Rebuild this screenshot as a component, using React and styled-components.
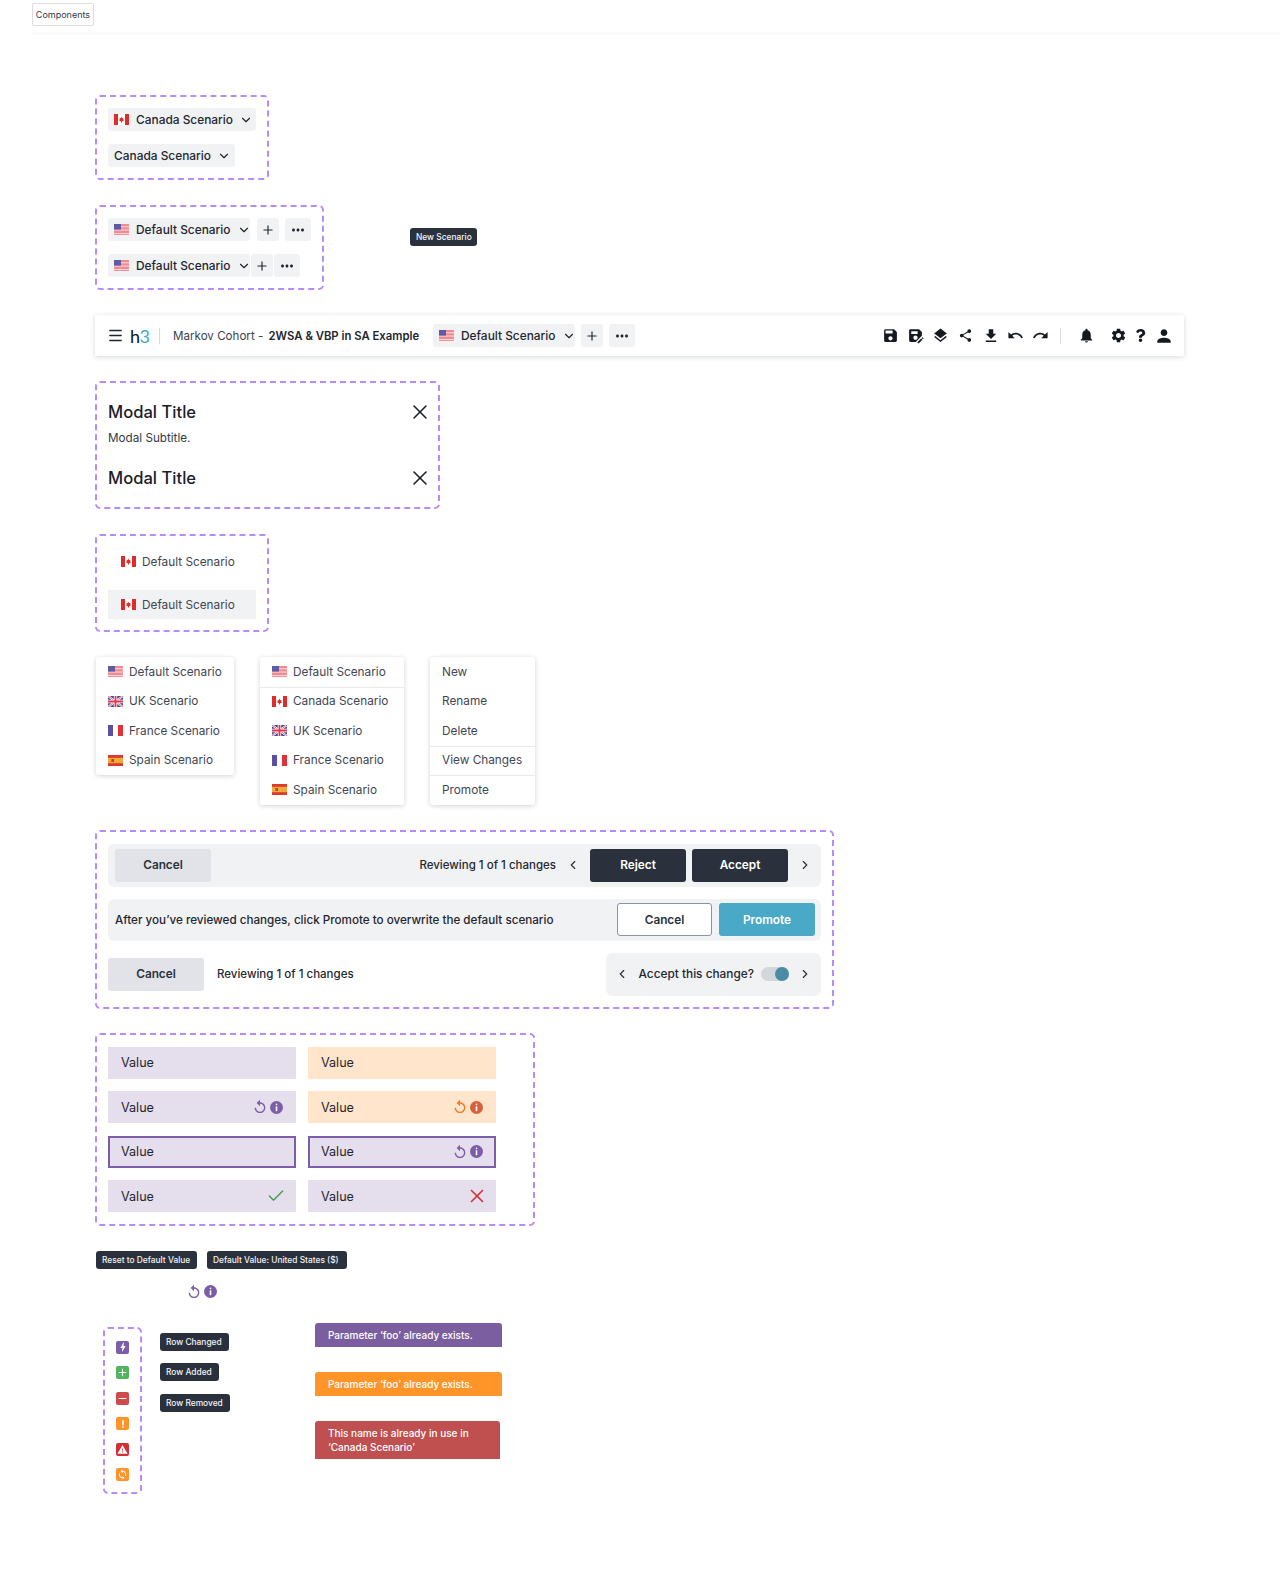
import React from 'react';
import styled, { createGlobalStyle } from 'styled-components';
import { Menu, Plus, ChevronDown, ChevronLeft, ChevronRight, Check, X } from 'lucide-react';
import { MdSave, MdSaveAs, MdLayers, MdShare, MdFileDownload, MdUndo, MdRedo, MdNotifications, MdSettings, MdPerson, MdReplay, MdMoreHoriz, MdBolt, MdAdd, MdRemove, MdPriorityHigh, MdWarning, MdSync } from 'react-icons/md';
import { FaQuestion } from 'react-icons/fa';

const GlobalStyle = createGlobalStyle`
  html, body { margin: 0; padding: 0; background: #fff; }
  body { font-family: Inter, "Open Sans", "Liberation Sans", sans-serif; color: #1f2630; }
  * { box-sizing: border-box; }
`;

const Page = styled.div`
  width: 1280px;
  height: 1589px;
  overflow: hidden;
  padding-top: 3px;
`;
const TopBar = styled.div`
  margin-left: 32px;
  padding-bottom: 7px;
  border-bottom: 1px solid #f7f7f9;
`;
const PageLabel = styled.div`
  width: 62px;
  height: 23px;
  border: 1px solid #dcdde3;
  border-radius: 2px;
  display: flex;
  align-items: center;
  justify-content: center;
  font-size: 9px;
  color: #333a45;
`;
const Content = styled.div`
  padding: 0 95px;
  display: flex;
  flex-direction: column;
  align-items: flex-start;
`;
const Frame = styled.section`
  border: 2px dashed #b88bfb;
  border-radius: 5px;
  padding: ${p => p.$pad || '10px 11px'};
  margin-top: ${p => p.$mt}px;
  width: ${p => p.$w}px;
  height: ${p => p.$h}px;
  display: flex;
  flex-direction: column;
  flex-shrink: 0;
`;
const Row = styled.div`
  display: flex;
  align-items: center;
  gap: ${p => p.$gap || 0}px;
  margin-top: ${p => p.$mt || 0}px;
  margin-left: ${p => p.$ml || 0}px;
`;
const Chip = styled.div`
  display: flex;
  align-items: center;
  height: 23px;
  padding: 0 5px 0 6px;
  gap: 6px;
  background: #f1f2f4;
  border-radius: 3px;
  font-size: 11.9px;
  font-weight: 500;
  white-space: nowrap;
  color: #1f2630;
  width: ${p => p.$w}px;
  justify-content: space-between;
  & > svg { flex-shrink: 0; }
`;
const ChipLabel = styled.span`
  display: flex;
  align-items: center;
  gap: 7px;
`;
const SquareChip = styled.div`
  display: flex;
  align-items: center;
  justify-content: center;
  width: ${p => p.$w}px;
  height: 23px;
  background: #f1f2f4;
  border-radius: 3px;
  margin-left: ${p => p.$ml || 0}px;
  color: #1f2630;
`;
const FlagSvg = styled.svg`
  width: 15px;
  height: 11px;
  display: block;
  flex-shrink: 0;
`;
const Flag = ({ kind }) => {
  if (kind === 'ca') return (
    <FlagSvg viewBox="0 0 15 11">
      <rect width="15" height="11" fill="#fff" />
      <rect width="4" height="11" fill="#e02b2b" />
      <rect x="11" width="4" height="11" fill="#e02b2b" />
      <path d="M7.5 2.6 8.2 4.2 9.4 3.8 9.1 5.5 10.4 6 8 7.6V8.6H7V7.6L4.6 6 5.9 5.5 5.6 3.8 6.8 4.2Z" fill="#e02b2b" />
    </FlagSvg>
  );
  if (kind === 'uk') return (
    <FlagSvg viewBox="0 0 15 11">
      <rect width="15" height="11" fill="#3c4f9a" />
      <path d="M0 0 15 11M15 0 0 11" stroke="#fff" strokeWidth="2" />
      <path d="M0 0 15 11M15 0 0 11" stroke="#e0455a" strokeWidth=".8" />
      <path d="M7.5 0V11M0 5.5H15" stroke="#fff" strokeWidth="3.4" />
      <path d="M7.5 0V11M0 5.5H15" stroke="#e0354a" strokeWidth="1.8" />
    </FlagSvg>
  );
  if (kind === 'fr') return (
    <FlagSvg viewBox="0 0 15 11">
      <rect width="5" height="11" fill="#5a4fa0" />
      <rect x="5" width="5" height="11" fill="#fff" />
      <rect x="10" width="5" height="11" fill="#e03038" />
    </FlagSvg>
  );
  if (kind === 'es') return (
    <FlagSvg viewBox="0 0 15 11">
      <rect width="15" height="11" fill="#f2a93b" />
      <rect width="15" height="2.8" fill="#dd3a2c" />
      <rect y="8.2" width="15" height="2.8" fill="#dd3a2c" />
      <rect x="3.4" y="4" width="2.6" height="3" fill="#b8452c" />
    </FlagSvg>
  );
  return (
    <FlagSvg viewBox="0 0 15 11">
      <rect width="15" height="11" fill="#f28a92" />
      <rect y="2.2" width="15" height="1.1" fill="#fbd5d7" />
      <rect y="5.5" width="15" height="1.1" fill="#fbd5d7" />
      <rect y="9" width="15" height="1.1" fill="#fbd5d7" />
      <rect width="7" height="5.6" fill="#5f5aa6" />
    </FlagSvg>
  );
};

const Tooltip = styled.div`
  display: inline-flex;
  align-items: center;
  height: 18px;
  padding: 0 6px;
  background: #2a313c;
  border-radius: 3px;
  color: #f3f4f6;
  font-size: 8.4px;
  font-weight: 500;
  white-space: nowrap;
  flex-shrink: 0;
  width: ${p => p.$w ? `${p.$w}px` : 'auto'};
`;
const FloatingTip = styled(Tooltip)`
  margin-left: 86px;
  margin-top: 4px;
  width: 67px;
`;

const Nav = styled.header`
  width: 1089px;
  height: 41px;
  margin-top: 25px;
  padding: 0 9px 0 12px;
  background: #fff;
  box-shadow: 0 1px 5px rgba(30, 40, 60, 0.18);
  display: flex;
  align-items: center;
`;
const Logo = styled.div`
  margin-left: 6px;
  width: 17px;
  font-family: "Lato", sans-serif;
  font-weight: 400;
  font-size: 18px;
  letter-spacing: -0.5px;
  color: #0f141a;
  & > span { color: #3fa8c9; }
`;
const NavDivider = styled.div`
  width: 1px;
  height: 16px;
  background: #d8dae0;
  margin: 0 ${p => p.$r}px 0 ${p => p.$l}px;
`;
const NavTitle = styled.div`
  font-size: 11.6px;
  color: #3a414d;
  white-space: nowrap;
  width: 247px;
  margin-right: 13px;
  & > b { font-size: 11.3px; font-weight: 600; color: #1f2630; margin-left: 2px; }
`;
const NavTools = styled.div`
  margin-left: auto;
  display: flex;
  align-items: center;
`;
const NavIcon = styled.span`
  width: ${p => p.$w || 25}px;
  margin-right: ${p => p.$mr || 0}px;
  display: flex;
  justify-content: center;
  color: #14181f;
`;

const ModalHead = styled.div`
  display: flex;
  align-items: center;
  justify-content: space-between;
  font-size: 16.6px;
  font-weight: 500;
  color: #1a2029;
  height: 24px;
  margin-top: ${p => p.$mt || 0}px;
`;
const CloseIcon = styled(X)`
  margin-right: -5px;
`;
const ModalSub = styled.div`
  font-size: 11.7px;
  color: #333a45;
  margin-top: 7px;
  height: 14px;
  line-height: 14px;
`;

const MenuItem = styled.div`
  display: flex;
  align-items: center;
  gap: 6px;
  height: ${p => p.$h || 29.5}px;
  padding: 0 12px;
  font-size: 11.8px;
  color: #3f4653;
  white-space: nowrap;
  background: ${p => p.$active ? '#f1f2f4' : 'transparent'};
  box-shadow: ${p => p.$line ? '0 1px 0 #e8eaee' : 'none'};
  margin-top: ${p => p.$mt || 0}px;
`;
const FrameItem = styled(MenuItem)`
  padding: 0 13px;
`;
const Dropdowns = styled.div`
  display: flex;
  align-items: flex-start;
  margin-top: 25px;
  margin-left: 1px;
`;
const DropMenu = styled.div`
  width: ${p => p.$w}px;
  margin-right: ${p => p.$mr || 0}px;
  background: #fff;
  border-radius: 3px;
  box-shadow: 0 1px 5px rgba(30, 40, 60, 0.2);
`;

const Bar = styled.div`
  display: flex;
  align-items: center;
  height: ${p => p.$h}px;
  background: #f1f2f4;
  border-radius: 6px;
  padding: 0 ${p => p.$pr ?? 6}px 0 7px;
  margin-top: ${p => p.$mt || 0}px;
  font-size: 11.65px;
  font-weight: 500;
  color: #1f2630;
  white-space: nowrap;
`;
const Action = styled.div`
  width: ${p => p.$w || 96}px;
  height: 33px;
  border-radius: 3px;
  display: flex;
  align-items: center;
  justify-content: center;
  font-size: 11.8px;
  font-weight: 600;
  flex-shrink: 0;
  margin-left: ${p => p.$ml || 0}px;
  color: ${p => ({ dark: '#fff', teal: '#fff' }[p.$kind] || '#2a313c')};
  background: ${p => ({ grey: '#e1e3e8', dark: '#2a313c', teal: '#4aa9c7', outline: '#fff' }[p.$kind])};
  border: ${p => p.$kind === 'outline' ? '1px solid #8d939e' : '0'};
`;
const Push = styled.span`
  margin-left: auto;
`;
const Chevron = styled.span`
  display: flex;
  justify-content: center;
  width: ${p => p.$w}px;
  color: #2a313c;
`;
const ReviewText = styled.span`
  font-size: 11.5px;
  font-weight: 500;
  margin-left: ${p => p.$ml || 0}px;
  white-space: nowrap;
`;
const AcceptText = styled(ReviewText)`
  font-size: 11.85px;
`;
const Toggle = styled.span`
  width: 28px;
  height: 14px;
  margin-left: 7px;
  border-radius: 7px;
  background: #d3d6db;
  position: relative;
  flex-shrink: 0;
  &::after {
    content: '';
    position: absolute;
    right: 0;
    top: 0;
    width: 14px;
    height: 14px;
    border-radius: 50%;
    background: #4a8ca6;
  }
`;

const FieldGrid = styled.div`
  display: grid;
  grid-template-columns: 188px 188px;
  grid-auto-rows: 32px;
  column-gap: 12px;
  row-gap: 12.6px;
`;
const Field = styled.div`
  display: flex;
  align-items: center;
  justify-content: space-between;
  font-size: 12.6px;
  color: #1f2630;
  background: ${p => p.$orange ? '#ffe5cc' : '#e5dfed'};
  border: ${p => p.$focus ? '2px solid #7b5ea7' : '0'};
  padding: 0 ${p => p.$focus ? 11 : 13}px;
`;
const FieldX = styled(X)`
  margin-right: -4.5px;
`;
const FieldCheck = styled(Check)`
  margin-right: -3px;
`;
const IconPair = styled.span`
  display: flex;
  align-items: center;
  gap: 2px;
  margin-left: ${p => p.$ml || 0}px;
  color: ${p => p.$color};
`;
const InfoSvg = styled.svg`
  width: 13px;
  height: 13px;
  display: block;
`;
const Info = ({ color }) => (
  <InfoSvg viewBox="0 0 13 13">
    <circle cx="6.5" cy="6.5" r="6.5" fill={color} />
    <rect x="5.7" y="2.6" width="1.6" height="1.6" rx=".8" fill="#fff" />
    <rect x="5.7" y="5.2" width="1.6" height="5" rx=".4" fill="#fff" />
  </InfoSvg>
);
const ResetInfo = ({ reset = '#7b5ea7', info = '#7b5ea7' }) => (
  <IconPair $color={reset}>
    <MdReplay size={16} />
    <Info color={info} />
  </IconPair>
);

const BottomRow = styled.div`
  display: flex;
  align-items: flex-start;
  margin-top: 27px;
  margin-left: 8px;
`;
const TipStack = styled.div`
  display: flex;
  flex-direction: column;
  align-items: flex-start;
  gap: 12.5px;
  margin-left: 18px;
  margin-top: 6px;
  width: 155px;
`;
const LegendFrame = styled(Frame)`
  align-items: center;
  padding: 12px 0 0;
  gap: 12.5px;
  margin-top: 0;
`;
const Badge = styled.span`
  width: 13px;
  height: 13px;
  border-radius: 2px;
  background: ${p => p.$bg};
  color: #fff;
  display: flex;
  align-items: center;
  justify-content: center;
  flex-shrink: 0;
`;
const AlertStack = styled.div`
  display: flex;
  flex-direction: column;
  align-items: flex-start;
  gap: 25px;
  margin-top: -4px;
`;
const Alert = styled.div`
  width: ${p => p.$w}px;
  min-height: 24px;
  padding: 5px 13px;
  border-radius: 3px 3px 0 0;
  background: ${p => p.$bg};
  color: #fff;
  font-size: 10px;
  font-weight: 500;
  line-height: 14px;
`;

const Dots = () => <MdMoreHoriz size={18} />;
const Caret = () => <ChevronDown size={14} strokeWidth={2} />;

const scenarios = [['us', 'Default Scenario'], ['uk', 'UK Scenario'], ['fr', 'France Scenario'], ['es', 'Spain Scenario']];
const scenarios2 = [['us', 'Default Scenario'], ['ca', 'Canada Scenario'], ['uk', 'UK Scenario'], ['fr', 'France Scenario'], ['es', 'Spain Scenario']];

export default function App() {
  return (
    <Page>
      <GlobalStyle />
      <TopBar><PageLabel>Components</PageLabel></TopBar>
      <Content>
        <Frame $mt={61} $w={174} $h={85} $pad="11px 11px">
          <Row><Chip $w={148}><ChipLabel><Flag kind="ca" />Canada Scenario</ChipLabel><Caret /></Chip></Row>
          <Row $mt={13}><Chip $w={127}>Canada Scenario<Caret /></Chip></Row>
        </Frame>

        <Row>
          <Frame $mt={25} $w={229} $h={85} $pad="11px 11px">
            <Row>
              <Chip $w={142}><ChipLabel><Flag kind="us" />Default Scenario</ChipLabel><Caret /></Chip>
              <SquareChip $w={22} $ml={7}><Plus size={14} /></SquareChip>
              <SquareChip $w={26} $ml={6}><Dots /></SquareChip>
            </Row>
            <Row $mt={13}>
              <Chip $w={142}><ChipLabel><Flag kind="us" />Default Scenario</ChipLabel><Caret /></Chip>
              <SquareChip $w={22} $ml={1}><Plus size={14} /></SquareChip>
              <SquareChip $w={26} $ml={1}><Dots /></SquareChip>
            </Row>
          </Frame>
          <FloatingTip>New Scenario</FloatingTip>
        </Row>

        <Nav>
          <Menu size={17} strokeWidth={2} />
          <Logo>h<span>3</span></Logo>
          <NavDivider $l={12} $r={13} />
          <NavTitle>Markov Cohort - <b>2WSA &amp; VBP in SA Example</b></NavTitle>
          <Chip $w={142}><ChipLabel><Flag kind="us" />Default Scenario</ChipLabel><Caret /></Chip>
          <SquareChip $w={22} $ml={6}><Plus size={14} /></SquareChip>
          <SquareChip $w={26} $ml={6}><Dots /></SquareChip>
          <NavTools>
            <NavIcon><MdSave size={17} /></NavIcon>
            <NavIcon><MdSaveAs size={17} /></NavIcon>
            <NavIcon><MdLayers size={17} /></NavIcon>
            <NavIcon><MdShare size={15} /></NavIcon>
            <NavIcon><MdFileDownload size={18} /></NavIcon>
            <NavIcon><MdUndo size={17} /></NavIcon>
            <NavIcon><MdRedo size={17} /></NavIcon>
            <NavDivider $l={7} $r={13} />
            <NavIcon $mr={8}><MdNotifications size={17} /></NavIcon>
            <NavIcon $w={22}><MdSettings size={17} /></NavIcon>
            <NavIcon $w={22} $mr={2}><FaQuestion size={13} /></NavIcon>
            <NavIcon $w={22}><MdPerson size={20} /></NavIcon>
          </NavTools>
        </Nav>

        <Frame $mt={25} $w={345} $h={128}>
          <ModalHead $mt={7}>Modal Title<CloseIcon size={24} strokeWidth={1.6} /></ModalHead>
          <ModalSub>Modal Subtitle.</ModalSub>
          <ModalHead $mt={21}>Modal Title<CloseIcon size={24} strokeWidth={1.6} /></ModalHead>
        </Frame>

        <Frame $mt={25} $w={174} $h={98} $pad="11px 11px 0">
          <FrameItem $h={29}><Flag kind="ca" />Default Scenario</FrameItem>
          <FrameItem $h={29} $mt={14} $active><Flag kind="ca" />Default Scenario</FrameItem>
        </Frame>

        <Dropdowns>
          <DropMenu $w={138} $mr={26}>
            {scenarios.map(([k, n]) => <MenuItem key={n}><Flag kind={k} />{n}</MenuItem>)}
          </DropMenu>
          <DropMenu $w={144} $mr={26}>
            {scenarios2.map(([k, n], i) => <MenuItem key={n} $line={i === 0}><Flag kind={k} />{n}</MenuItem>)}
          </DropMenu>
          <DropMenu $w={105}>
            <MenuItem>New</MenuItem>
            <MenuItem>Rename</MenuItem>
            <MenuItem $line>Delete</MenuItem>
            <MenuItem $line>View Changes</MenuItem>
            <MenuItem>Promote</MenuItem>
          </DropMenu>
        </Dropdowns>

        <Frame $mt={25} $w={739} $h={179} $pad="12px 11px 10px 11px">
          <Bar $h={43} $pr={0}>
            <Action $kind="grey">Cancel</Action>
            <Push />
            <ReviewText>Reviewing 1 of 1 changes</ReviewText>
            <Chevron $w={34}><ChevronLeft size={14} /></Chevron>
            <Action $kind="dark">Reject</Action>
            <Action $kind="dark" $ml={6}>Accept</Action>
            <Chevron $w={33}><ChevronRight size={14} /></Chevron>
          </Bar>
          <Bar $h={42} $mt={12}>
            <span>After you’ve reviewed changes, click Promote to overwrite the default scenario</span>
            <Push />
            <Action $kind="outline" $w={95}>Cancel</Action>
            <Action $kind="teal" $ml={7}>Promote</Action>
          </Bar>
          <Row $mt={12}>
            <Action $kind="grey">Cancel</Action>
            <ReviewText $ml={13}>Reviewing 1 of 1 changes</ReviewText>
            <Push />
            <Bar $h={43} $pr={0}>
              <Chevron $w={19}><ChevronLeft size={14} /></Chevron>
              <AcceptText $ml={7}>Accept this change?</AcceptText>
              <Toggle />
              <Chevron $w={32}><ChevronRight size={14} /></Chevron>
            </Bar>
          </Row>
        </Frame>

        <Frame $mt={24} $w={440} $h={193} $pad="12px 11px 10px">
          <FieldGrid>
            <Field>Value</Field>
            <Field $orange>Value</Field>
            <Field>Value<ResetInfo /></Field>
            <Field $orange>Value<ResetInfo reset="#f27a1a" info="#d8603a" /></Field>
            <Field $focus>Value</Field>
            <Field $focus>Value<ResetInfo /></Field>
            <Field>Value<FieldCheck size={20} color="#3f9a4c" strokeWidth={1.6} /></Field>
            <Field>Value<FieldX size={22} color="#d8303a" strokeWidth={1.8} /></Field>
          </FieldGrid>
        </Frame>

        <Row $gap={10} $mt={25} $ml={1}>
          <Tooltip $w={101}>Reset to Default Value</Tooltip>
          <Tooltip $w={140}>Default Value: United States ($)</Tooltip>
        </Row>
        <Row $mt={15} $ml={91}><ResetInfo /></Row>

        <BottomRow>
          <LegendFrame $w={39} $h={167}>
            <Badge $bg="#7b5ea7"><MdBolt size={12} /></Badge>
            <Badge $bg="#4fb45c"><MdAdd size={13} /></Badge>
            <Badge $bg="#cf4a4a"><MdRemove size={13} /></Badge>
            <Badge $bg="#ff9528"><MdPriorityHigh size={10} /></Badge>
            <Badge $bg="#d32f36"><MdWarning size={11} /></Badge>
            <Badge $bg="#ff9528"><MdSync size={11} /></Badge>
          </LegendFrame>
          <TipStack>
            <Tooltip $w={69}>Row Changed</Tooltip>
            <Tooltip $w={59}>Row Added</Tooltip>
            <Tooltip $w={70}>Row Removed</Tooltip>
          </TipStack>
          <AlertStack>
            <Alert $w={187} $bg="#7b5ea0">Parameter ‘foo’ already exists.</Alert>
            <Alert $w={187} $bg="#ff9528">Parameter ‘foo’ already exists.</Alert>
            <Alert $w={185} $bg="#c04f4f">This name is already in use in<br />‘Canada Scenario’</Alert>
          </AlertStack>
        </BottomRow>
      </Content>
    </Page>
  );
}
